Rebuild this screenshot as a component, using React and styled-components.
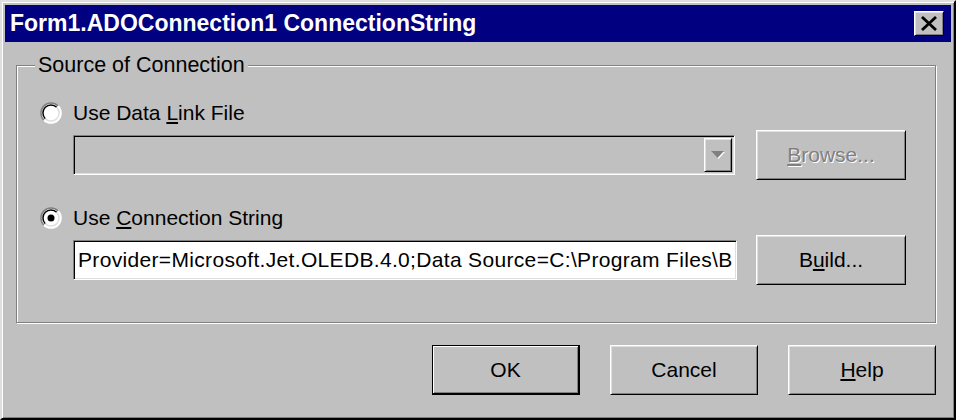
import React from "react";
import styled, { createGlobalStyle, css } from "styled-components";

const GlobalStyle = createGlobalStyle`
  html, body {
    margin: 0;
    padding: 0;
    background: #c0c0c0;
  }
  body {
    font-family: "Liberation Sans", Arial, sans-serif;
    color: #000;
  }
`;

const raised = css`
  border: 1px solid;
  border-color: #fff #000 #000 #fff;
  box-shadow: inset 1px 1px 0 #dfdfdf, inset -1px -1px 0 #808080;
`;

const sunken = css`
  border: 1px solid;
  border-color: #808080 #fff #fff #808080;
  box-shadow: inset 1px 1px 0 #000, inset -1px -1px 0 #dfdfdf;
`;

const Window = styled.div`
  width: 956px;
  height: 420px;
  box-sizing: border-box;
  background: #c0c0c0;
  border: 2px solid;
  border-color: #dfdfdf #000 #000 #dfdfdf;
  box-shadow: inset 1px 1px 0 #fff, inset -1px -1px 0 #808080;
  padding: 3px;
  display: flex;
  flex-direction: column;
`;

const TitleBar = styled.div`
  height: 37px;
  flex-shrink: 0;
  background: #000080;
  display: flex;
  align-items: center;
  justify-content: space-between;
  padding: 0 7px 0 5px;
`;

const Title = styled.div`
  color: #fff;
  font-weight: bold;
  font-size: 23px;
  white-space: nowrap;
`;

const CloseButton = styled.button`
  ${raised};
  width: 30px;
  height: 25px;
  padding: 0;
  background: #c0c0c0;
  display: flex;
  align-items: center;
  justify-content: center;
`;

const Content = styled.div`
  flex: 1;
  display: flex;
  flex-direction: column;
  padding: 0 15px 0 11px;
`;

const Group = styled.fieldset`
  margin: 11px 0 0 0;
  padding: 22px 29px 37px 23px;
  min-width: 0;
  border: 1px solid #808080;
  box-shadow: inset 1px 1px 0 #fff, 1px 1px 0 #fff;
  display: flex;
  flex-direction: column;
  gap: 24px;
`;

const Legend = styled.legend`
  font-size: 21.5px;
  line-height: 24px;
  padding: 0 3px;
  margin-left: -5px;
  background: #c0c0c0;
`;

const Option = styled.div`
  display: grid;
  grid-template-columns: 33px 1fr 150px;
  grid-template-rows: 28px 50px;
  row-gap: 3px;
`;

const RadioRow = styled.label`
  grid-column: 1 / -1;
  display: flex;
  align-items: center;
  font-size: 21px;
  white-space: nowrap;
`;

const RadioMark = styled.span`
  width: 33px;
  flex-shrink: 0;
  display: flex;
  align-items: center;
`;

const Combo = styled.div`
  ${sunken};
  grid-column: 2;
  align-self: center;
  height: 40px;
  box-sizing: border-box;
  margin-right: 21px;
  background: #c0c0c0;
  display: flex;
  justify-content: flex-end;
  padding: 2px;
`;

const DropButton = styled.div`
  ${raised};
  width: 28px;
  box-sizing: border-box;
  background: #c0c0c0;
  display: flex;
  align-items: center;
  justify-content: center;
`;

const TextField = styled.div`
  ${sunken};
  grid-column: 2;
  align-self: center;
  height: 40px;
  box-sizing: border-box;
  margin-right: 19px;
  background: #fff;
  font-size: 21px;
  letter-spacing: 0.33px;
  line-height: 38px;
  padding: 0 4px;
  white-space: nowrap;
  overflow: hidden;
`;

const Button = styled.button`
  ${raised};
  width: ${(p) => p.$width || 150}px;
  height: 50px;
  background: #c0c0c0;
  font-family: inherit;
  font-size: 21px;
  color: #000;
  padding: 0;
  grid-column: 3;

  ${(p) =>
    p.$default &&
    css`
      border-color: #000;
      border-width: 1px 2px 2px 1px;
      box-shadow: inset 1px 1px 0 #fff, inset -1px -1px 0 #808080;
    `}

  &:disabled {
    color: #808080;
    text-shadow: 1px 1px 0 #fff;
  }
`;

const Footer = styled.div`
  display: flex;
  justify-content: flex-end;
  gap: 30px;
  margin-top: 22px;
`;

const Radio = ({ checked }) => (
  <svg width="22" height="22" viewBox="0 0 22 22">
    <circle cx="11" cy="11" r="10" fill="#fff" />
    <path d="M3.9 18.1 A10 10 0 0 1 18.1 3.9" fill="none" stroke="#808080" strokeWidth="1.5" />
    <path d="M18.1 3.9 A10 10 0 0 1 3.9 18.1" fill="none" stroke="#fff" strokeWidth="1.5" />
    <path d="M5.3 16.7 A8 8 0 0 1 16.7 5.3" fill="none" stroke="#000" strokeWidth="1.5" />
    <path d="M16.7 5.3 A8 8 0 0 1 5.3 16.7" fill="none" stroke="#dfdfdf" strokeWidth="1.5" />
    {checked && <circle cx="11" cy="11" r="3.5" fill="#000" />}
  </svg>
);

const App = () => (
  <>
    <GlobalStyle />
    <Window>
      <TitleBar>
        <Title>Form1.ADOConnection1 ConnectionString</Title>
        <CloseButton aria-label="Close">
          <svg width="18" height="15" viewBox="0 0 18 15">
            <path d="M2 1 L16 14 M16 1 L2 14" stroke="#000" strokeWidth="2.8" />
          </svg>
        </CloseButton>
      </TitleBar>
      <Content>
        <Group>
          <Legend>Source of Connection</Legend>
          <Option>
            <RadioRow>
              <RadioMark>
                <Radio />
              </RadioMark>
              <span>
                Use Data <u>L</u>ink File
              </span>
            </RadioRow>
            <Combo>
              <DropButton>
                <svg width="18" height="12" viewBox="0 0 18 12">
                  <path d="M2 2 L15 2 L8.5 9 Z" fill="#fff" transform="translate(1 1)" />
                  <path d="M2 2 L15 2 L8.5 9 Z" fill="#808080" />
                </svg>
              </DropButton>
            </Combo>
            <Button disabled>
              <u>B</u>rowse...
            </Button>
          </Option>
          <Option>
            <RadioRow>
              <RadioMark>
                <Radio checked />
              </RadioMark>
              <span>
                Use <u>C</u>onnection String
              </span>
            </RadioRow>
            <TextField>
              Provider=Microsoft.Jet.OLEDB.4.0;Data Source=C:\Program Files\B
            </TextField>
            <Button>
              B<u>u</u>ild...
            </Button>
          </Option>
        </Group>
        <Footer>
          <Button $default $width={148}>
            OK
          </Button>
          <Button $width={148}>Cancel</Button>
          <Button $width={148}>
            <u>H</u>elp
          </Button>
        </Footer>
      </Content>
    </Window>
  </>
);

export default App;
